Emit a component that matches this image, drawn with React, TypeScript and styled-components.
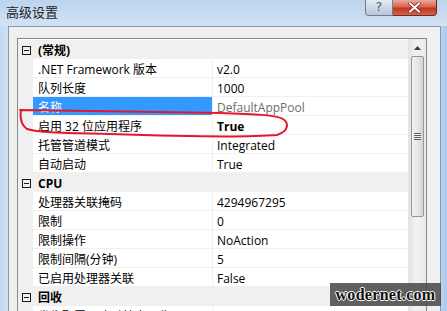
import styled, { createGlobalStyle } from "styled-components";

const Global = createGlobalStyle`
  html, body { margin: 0; padding: 0; overflow: hidden; background: #cfe0f3; }
  #root { width: 447px; height: 311px; }
`;

const ui = `"Open Sans", "Noto Sans", "Noto Sans CJK SC", sans-serif`;

type Row =
  | { kind: "cat"; label: string }
  | { kind: "prop"; label: string; value: string; selected?: boolean; bold?: boolean; readOnly?: boolean };

const rows: Row[] = [
  { kind: "cat", label: "(常规)" },
  { kind: "prop", label: ".NET Framework 版本", value: "v2.0" },
  { kind: "prop", label: "队列长度", value: "1000" },
  { kind: "prop", label: "名称", value: "DefaultAppPool", selected: true, readOnly: true },
  { kind: "prop", label: "启用 32 位应用程序", value: "True", bold: true },
  { kind: "prop", label: "托管管道模式", value: "Integrated" },
  { kind: "prop", label: "自动启动", value: "True" },
  { kind: "cat", label: "CPU" },
  { kind: "prop", label: "处理器关联掩码", value: "4294967295" },
  { kind: "prop", label: "限制", value: "0" },
  { kind: "prop", label: "限制操作", value: "NoAction" },
  { kind: "prop", label: "限制间隔(分钟)", value: "5" },
  { kind: "prop", label: "已启用处理器关联", value: "False" },
  { kind: "cat", label: "回收" },
  { kind: "prop", label: "发生配置更改时禁止回收", value: "False" },
];

export default function App() {
  return (
    <>
      <Global />
      <Window>
        <TitleBar>
          <Title>高级设置</Title>
          <Caption>
            <HelpButton>?</HelpButton>
            <CloseButton>
              <svg width="13" height="11" viewBox="0 0 13 11">
                <path d="M2 1.5 L11 9.5 M11 1.5 L2 9.5" stroke="#7a1d14" strokeWidth="3.4" strokeLinecap="square" />
                <path d="M2 1.5 L11 9.5 M11 1.5 L2 9.5" stroke="#fff" strokeWidth="2" strokeLinecap="square" />
              </svg>
            </CloseButton>
          </Caption>
        </TitleBar>
        <Body>
          <Grid>
            <Rows>
              {rows.map((r, i) =>
                r.kind === "cat" ? (
                  <CatRow key={i}>
                    <Gutter>
                      <Toggle />
                    </Gutter>
                    <CatLabel>{r.label}</CatLabel>
                  </CatRow>
                ) : (
                  <PropRow key={i}>
                    <Gutter />
                    <NameCell $selected={r.selected}>{r.label}</NameCell>
                    <ValueCell $bold={r.bold} $readOnly={r.readOnly}>{r.value}</ValueCell>
                  </PropRow>
                )
              )}
            </Rows>
            <ScrollBar>
              <ArrowBtn>
                <svg width="7" height="4" viewBox="0 0 7 4">
                  <path d="M0 4 L3.5 0 L7 4 Z" fill="#404040" />
                </svg>
              </ArrowBtn>
              <Thumb>
                <Grip />
              </Thumb>
            </ScrollBar>
          </Grid>
          <Ellipse width="280" height="34" viewBox="0 0 280 34">
            <path
              d="M1 3 C60 4 150 5 200 6 C235 7 258 8 264 12 C270 16 270 24 258 28 C220 31 150 29 90 27 C50 26 20 26 8 22 C2 18 1 10 2 3"
              fill="none"
              stroke="#e5172b"
              strokeWidth="2"
              strokeLinecap="round"
            />
          </Ellipse>
          <Watermark>wodernet.com</Watermark>
        </Body>
      </Window>
    </>
  );
}

const Window = styled.div`
  width: 447px;
  height: 311px;
  display: flex;
  flex-direction: column;
  background: linear-gradient(90deg, #c4d9f1 0%, #d6e5f6 3%, #d2e3f5 97%, #a9c8ef 100%);
  overflow: hidden;
`;

const TitleBar = styled.div`
  height: 26px;
  flex-shrink: 0;
  display: flex;
  justify-content: space-between;
  align-items: flex-start;
  background: linear-gradient(180deg, #bcd4ee 0%, #c9dcf1 60%, #d3e3f5 100%);
`;

const Title = styled.div`
  font-family: "Noto Sans CJK SC", sans-serif;
  font-size: 13px;
  color: #1e1e1e;
  padding: 3px 0 0 6px;
  line-height: 18px;
`;

const Caption = styled.div`
  display: flex;
  margin-right: 10px;
`;

const HelpButton = styled.div`
  width: 26px;
  height: 15px;
  border: 1px solid #6f7d8f;
  border-top: none;
  border-radius: 0 0 0 4px;
  background: linear-gradient(180deg, #e3ebf4 0%, #cbd8e6 50%, #b6c6d8 100%);
  font-family: "DejaVu Sans", sans-serif;
  font-size: 12px;
  line-height: 15px;
  text-align: center;
  color: #4b5a6b;
`;

const CloseButton = styled.div`
  width: 43px;
  height: 15px;
  border: 1px solid #6d2a22;
  border-left: none;
  border-top: none;
  border-radius: 0 0 4px 0;
  background: linear-gradient(180deg, #e9a99c 0%, #d6644f 45%, #c2371f 55%, #d2624a 100%);
  display: flex;
  align-items: center;
  justify-content: center;
`;

const Body = styled.div`
  position: relative;
  flex: 1;
  margin: 0 6px 0 8px;
  padding: 11px 13px 0 8px;
  background: #f0f0f0;
  border: 1px solid #8a98aa;
  border-bottom: none;
  min-height: 0;
`;

const Grid = styled.div`
  height: 290px;
  display: flex;
  background: #fff;
  border: 1px solid #828790;
`;

const Rows = styled.div`
  flex: 1;
  display: flex;
  flex-direction: column;
  padding-top: 1px;
`;

const BaseRow = styled.div`
  height: 19px;
  flex-shrink: 0;
  display: flex;
  box-sizing: border-box;
  font-size: 12px;
  line-height: 16px;
  color: #000;
`;

const CatRow = styled(BaseRow)`
  background: #f0f0f0;
`;

const PropRow = styled(BaseRow)`
  border-bottom: 1px solid #f0f0f0;
`;

const Gutter = styled.div`
  width: 15px;
  flex-shrink: 0;
  background: #f0f0f0;
  display: flex;
  align-items: center;
  justify-content: center;
`;

const Toggle = styled.div`
  position: relative;
  width: 7px;
  height: 7px;
  border: 1px solid #1a1a1a;
  margin: 1px 0 0 2px;
  &::after {
    content: "";
    position: absolute;
    left: 1px;
    right: 1px;
    top: 3px;
    height: 1px;
    background: #1a1a1a;
  }
`;

const CatLabel = styled.div`
  padding: 3px 0 0 5px;
  font-family: ${ui};
  font-weight: bold;
`;

const NameCell = styled.div<{ $selected?: boolean }>`
  width: 180px;
  flex-shrink: 0;
  padding: 3px 0 0 5px;
  box-sizing: border-box;
  border-right: 1px solid #f0f0f0;
  font-family: ${ui};
  white-space: nowrap;
  background: ${(p) => (p.$selected ? "#3399ff" : "#fff")};
  color: ${(p) => (p.$selected ? "#fff" : "#000")};
`;

const ValueCell = styled.div<{ $bold?: boolean; $readOnly?: boolean }>`
  flex: 1;
  padding: 3px 0 0 4px;
  font-family: ${ui};
  font-weight: ${(p) => (p.$bold ? "bold" : "normal")};
  color: ${(p) => (p.$readOnly ? "#6d6d6d" : "#000")};
  white-space: nowrap;
`;

const ScrollBar = styled.div`
  width: 17px;
  flex-shrink: 0;
  display: flex;
  flex-direction: column;
  align-items: center;
  background: linear-gradient(90deg, #e3e3e3 0%, #f2f2f2 40%, #eaeaea 100%);
  border-left: 1px solid #e6e6e6;
`;

const ArrowBtn = styled.div`
  height: 17px;
  width: 100%;
  display: flex;
  align-items: center;
  justify-content: center;
`;

const Thumb = styled.div`
  width: 13px;
  height: 161px;
  box-sizing: border-box;
  border: 1px solid #979797;
  border-radius: 2px;
  background: linear-gradient(90deg, #f2f2f2 0%, #e6e6e6 50%, #d4d4d4 100%);
  display: flex;
  align-items: center;
  justify-content: center;
`;

const Grip = styled.div`
  width: 7px;
  height: 7px;
  background: repeating-linear-gradient(180deg, #5c5c5c 0 1px, #f4f4f4 1px 2px);
`;

const Ellipse = styled.svg`
  position: absolute;
  left: 10px;
  top: 80px;
`;

const Watermark = styled.div`
  position: absolute;
  left: 321px;
  top: 256px;
  width: 111px;
  height: 23px;
  background: rgba(70, 70, 70, 0.85);
  font-family: "Liberation Serif", "DejaVu Serif", serif;
  font-weight: bold;
  font-size: 16px;
  line-height: 23px;
  text-align: center;
  color: #111;
  letter-spacing: 0.3px;
  text-shadow: 1px 0 0 #fff, -1px 0 0 #fff, 0 1px 0 #fff, 0 -1px 0 #fff;
`;
